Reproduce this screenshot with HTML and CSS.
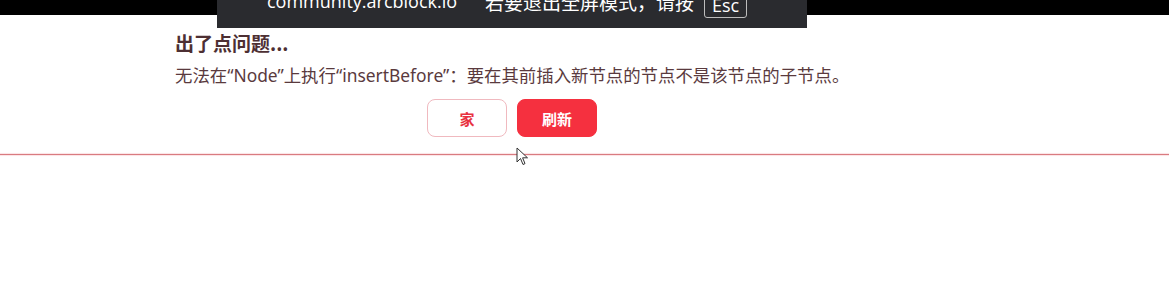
FILE: index.html
```html
<!DOCTYPE html>
<html lang="zh">
<head>
<meta charset="utf-8">
<link rel="stylesheet" href="styles.css">
</head>
<body>
<div class="topstrip"></div>
<div class="fs-bubble">
  <span class="site">community.arcblock.io</span>
  <span class="hint">若要退出全屏模式，请按</span>
  <span class="key">Esc</span>
</div>
<main class="error">
  <h1 class="title">出了点问题...</h1>
  <p class="msg">无法在“Node”上执行“insertBefore”：要在其前插入新节点的节点不是该节点的子节点。</p>
  <div class="actions">
    <button class="btn btn-outline">家</button>
    <button class="btn btn-solid">刷新</button>
  </div>
</main>
<div class="rule"></div>
<svg class="cursor" width="13" height="20" viewBox="0 0 13 20">
  <path d="M1 1 L1 15 L4.5 11.5 L7 17.5 L9 16.6 L6.6 10.8 L11.5 10.8 Z" fill="#fff" stroke="#333" stroke-width="1"/>
</svg>
</body>
</html>
```

FILE: styles.css
```css
html, body {
  margin: 0;
  padding: 0;
  background: #fff;
  width: 1169px;
  height: 284px;
  overflow: hidden;
  font-family: "Noto Sans CJK SC", "Noto Sans", sans-serif;
  position: relative;
}
.topstrip {
  height: 15px;
  background: #000;
}
.fs-bubble {
  position: absolute;
  left: 217px;
  top: 0;
  width: 590px;
  height: 28px;
  background: #2a2b2f;
  box-sizing: border-box;
  padding-left: 50px;
  display: flex;
  align-items: flex-end;
  color: #fff;
  line-height: 1;
  overflow: hidden;
}
.fs-bubble .site {
  font-family: "Open Sans", "Noto Sans", sans-serif;
  font-size: 18px;
  margin-bottom: 18px;
  white-space: nowrap;
}
.fs-bubble .hint {
  font-size: 19px;
  margin-left: 28px;
  margin-bottom: 17px;
  white-space: nowrap;
}
.fs-bubble .key {
  margin-left: 10px;
  margin-bottom: 10px;
  width: 43px;
  height: 30px;
  box-sizing: border-box;
  border: 1px solid #bdbdbd;
  border-radius: 0 0 3px 3px;
  display: flex;
  align-items: flex-end;
  justify-content: center;
  padding-bottom: 3px;
  font-family: "Open Sans", sans-serif;
  font-size: 18px;
}
.error {
  width: 674px;
  margin-left: 175px;
  padding-top: 14px;
}
.title {
  margin: 0;
  font-size: 19px;
  line-height: 28px;
  font-weight: 700;
  color: #4d2f33;
}
.msg {
  margin: 6px 0 0;
  font-family: "Noto Sans", "Noto Sans CJK SC", sans-serif;
  font-size: 17.4px;
  line-height: 24px;
  color: #5a3a3e;
  white-space: nowrap;
}
.actions {
  display: flex;
  justify-content: center;
  gap: 10px;
  margin-top: 12px;
}
.btn {
  width: 80px;
  height: 38px;
  border-radius: 8px;
  font-family: "Noto Sans CJK SC", sans-serif;
  font-size: 15px;
  font-weight: 700;
  box-sizing: border-box;
  cursor: pointer;
}
.btn-outline {
  background: #fff;
  border: 1px solid #f0b9bf;
  color: #e8323f;
}
.btn-solid {
  background: #f5303f;
  border: 1px solid #f5303f;
  color: #fff;
}
.rule {
  margin-top: 17px;
  height: 1px;
  background: #d97b80;
  box-shadow: 0 0 1px 1px #fbe3e5;
}
.cursor {
  position: absolute;
  left: 516px;
  top: 147px;
}
```
